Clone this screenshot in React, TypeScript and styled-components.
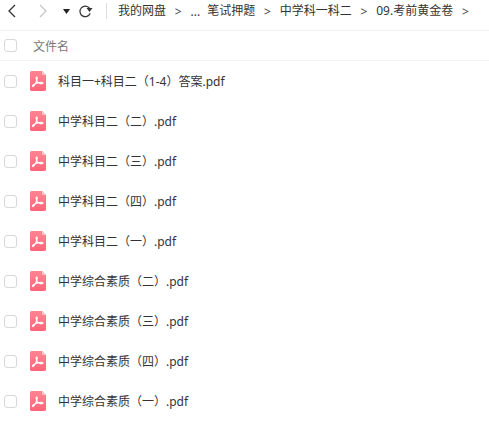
import React from 'react';
import styled, { createGlobalStyle } from 'styled-components';

const GlobalStyle = createGlobalStyle`
  html, body {
    margin: 0;
    padding: 0;
    background: #fff;
    overflow: hidden;
  }
  body {
    font-family: "Noto Sans", "Noto Sans CJK SC", sans-serif;
  }
`

const Page = styled.div`
  width: 489px;
  height: 421px;
  display: flex;
  flex-direction: column;
  overflow: hidden;
`

const Toolbar = styled.div`
  height: 30px;
  box-sizing: content-box;
  display: flex;
  align-items: flex-start;
  border-bottom: 1px solid #efefef;
`

const NavButton = styled.button<{ $width: number }>`
  width: ${props => props.$width}px;
  height: 22px;
  flex: none;
  padding: 0;
  border: 0;
  background: none;
  display: flex;
  align-items: center;
  justify-content: center;
`

const Divider = styled.div`
  width: 1px;
  height: 16px;
  flex: none;
  margin: 3px 11px 0 4px;
  background: #dcdcdc;
`

const Crumbs = styled.div`
  height: 22px;
  display: flex;
  align-items: center;
  font-size: 12px;
  color: #333;
  white-space: nowrap;
`

const Crumb = styled.span`
  line-height: 20px;
`

const Separator = styled.span`
  width: 24.5px;
  text-align: center;
  color: #444;
`

const Ellipsis = styled.span`
  margin-right: 7px;
`

const HeaderRow = styled.div`
  height: 29px;
  display: flex;
  align-items: center;
  padding-left: 4px;
  border-bottom: 1px solid #f3f3f3;
`

const Checkbox = styled.span`
  width: 13px;
  height: 13px;
  box-sizing: border-box;
  flex: none;
  border: 1px solid #d8d8d8;
  border-radius: 3px;
  background: #fff;
`

const ColumnTitle = styled.span`
  margin-left: 16px;
  font-size: 12px;
  color: #777;
`

const FileList = styled.div`
  display: flex;
  flex-direction: column;
`

const FileRow = styled.div`
  height: 40px;
  display: flex;
  align-items: center;
  padding-left: 4px;
`

const FileIcon = styled.svg`
  width: 16px;
  height: 20px;
  flex: none;
  margin-left: 13px;
`

const FileName = styled.span`
  margin: 2px 0 0 12px;
  font-size: 12px;
  line-height: 18px;
  color: #333;
  white-space: nowrap;
`

const files = [
  '科目一+科目二（1-4）答案.pdf',
  '中学科目二（二）.pdf',
  '中学科目二（三）.pdf',
  '中学科目二（四）.pdf',
  '中学科目二（一）.pdf',
  '中学综合素质（二）.pdf',
  '中学综合素质（三）.pdf',
  '中学综合素质（四）.pdf',
  '中学综合素质（一）.pdf',
]

const crumbs = ['笔试押题', '中学科一科二', '09.考前黄金卷']

const PdfIcon = ({ id }: { id: string }) => (
  <FileIcon viewBox="0 0 16 20">
    <defs>
      <linearGradient id={id} x1="0" y1="0" x2="0" y2="1">
        <stop offset="0" stopColor="#ff8593" />
        <stop offset="1" stopColor="#ff6579" />
      </linearGradient>
    </defs>
    <path d="M1.5 0H12l4 4v14.5a1.5 1.5 0 0 1-1.5 1.5h-13A1.5 1.5 0 0 1 0 18.5v-17A1.5 1.5 0 0 1 1.5 0z" fill={`url(#${id})`} />
    <path d="M12 0l4 4h-3a1 1 0 0 1-1-1z" fill="#ffc4cb" />
    <path
      d="M2.8 15.6c1.3-.7 3.6-4.6 4.4-8 .2-1-.1-1.6-.6-1.6-.6 0-.7.8-.5 1.7.5 2 2.5 4.6 4.5 4.9 1 .1 2.4.1 2.4-.6 0-.7-1.6-.8-3.2-.6-2.4.3-5 1.1-6.6 2.6-.7.7-.9 1.3-.4 1.6z"
      fill="none"
      stroke="#fff"
      strokeWidth="1.1"
      strokeLinejoin="round"
    />
  </FileIcon>
)

export default function App() {
  return (
    <Page>
      <GlobalStyle />
      <Toolbar>
        <NavButton $width={24}>
          <svg width="10" height="14" viewBox="0 0 10 14">
            <path d="M8 1L2 7l6 6" fill="none" stroke="#333" strokeWidth="1.3" />
          </svg>
        </NavButton>
        <NavButton $width={38}>
          <svg width="10" height="14" viewBox="0 0 10 14">
            <path d="M2 1l6 6-6 6" fill="none" stroke="#c4c4c4" strokeWidth="1.2" />
          </svg>
        </NavButton>
        <NavButton $width={8}>
          <svg width="7" height="5" viewBox="0 0 7 5">
            <path d="M0 0h7L3.5 5z" fill="#222" />
          </svg>
        </NavButton>
        <NavButton $width={32}>
          <svg width="14" height="14" viewBox="0 0 14 14">
            <path d="M10.5 4.2A5.3 5.3 0 1 0 11.2 9.3" fill="none" stroke="#333" strokeWidth="1.2" />
            <path d="M7.5 4h6l-3 4z" fill="#333" />
          </svg>
        </NavButton>
        <Divider />
        <Crumbs>
          <Crumb>我的网盘</Crumb>
          <Separator>&gt;</Separator>
          <Ellipsis>...</Ellipsis>
          {crumbs.map(crumb => (
            <React.Fragment key={crumb}>
              <Crumb>{crumb}</Crumb>
              <Separator>&gt;</Separator>
            </React.Fragment>
          ))}
        </Crumbs>
      </Toolbar>
      <HeaderRow>
        <Checkbox />
        <ColumnTitle>文件名</ColumnTitle>
      </HeaderRow>
      <FileList>
        {files.map((name, i) => (
          <FileRow key={name}>
            <Checkbox />
            <PdfIcon id={`pdf-fill-${i}`} />
            <FileName>{name}</FileName>
          </FileRow>
        ))}
      </FileList>
    </Page>
  )
}
